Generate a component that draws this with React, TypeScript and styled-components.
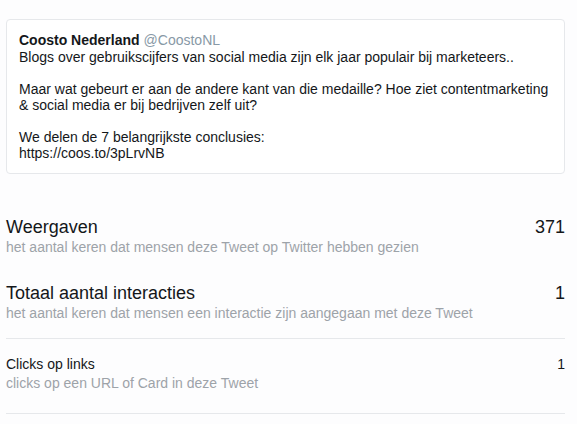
import { createGlobalStyle, styled } from "styled-components";

const GlobalStyle = createGlobalStyle`
    html, body {
        margin: 0;
        padding: 0;
        background: #fdfdfe;
        font-family: "Liberation Sans", Arial, sans-serif;
        color: #14171a;
    }
`;

const Page = styled.div`
    width: 559px;
    padding: 19px 12px 0 6px;
`;

const TweetCard = styled.div`
    border: 1px solid #e6e8eb;
    border-radius: 4px;
    background: #fff;
    padding: 12px 12px 12px 12px;
    font-size: 14px;
    line-height: 16px;
`;

const Name = styled.span`
    font-weight: 700;
    font-size: 14px;
`;

const Handle = styled.span`
    color: #8899a6;
    font-size: 14px;
    margin-left: 4px;
`;

const Body = styled.p`
    margin: 1px 0 0;
    white-space: pre-line;
`;

const Metrics = styled.div`
    margin-top: 42px;
`;

const Metric = styled.div<{ $divider?: boolean; $gap: number }>`
    display: flex;
    justify-content: space-between;
    padding-bottom: ${(p) => p.$gap}px;
    border-bottom: ${(p) => (p.$divider ? "1px solid #e6e8eb" : "none")};
    margin-bottom: ${(p) => (p.$divider ? 16 : 0)}px;
`;

const Label = styled.div<{ $small?: boolean }>`
    font-size: ${(p) => (p.$small ? 14 : 18)}px;
    line-height: ${(p) => (p.$small ? 19 : 22)}px;
    color: #14171a;
`;

const Hint = styled.div`
    font-size: 14px;
    line-height: 18px;
    color: #9da3a9;
`;

const Value = styled.div<{ $small?: boolean }>`
    font-size: ${(p) => (p.$small ? 14 : 18)}px;
    line-height: ${(p) => (p.$small ? 19 : 22)}px;
`;

const tweetText = `Blogs over gebruikscijfers van social media zijn elk jaar populair bij marketeers..

Maar wat gebeurt er aan de andere kant van die medaille? Hoe ziet contentmarketing & social media er bij bedrijven zelf uit?

We delen de 7 belangrijkste conclusies:
https://coos.to/3pLrvNB`;

export default function App() {
    return (
        <>
            <GlobalStyle />
            <Page>
                <TweetCard>
                    <Name>Coosto Nederland</Name>
                    <Handle>@CoostoNL</Handle>
                    <Body>{tweetText}</Body>
                </TweetCard>
                <Metrics>
                    <Metric $gap={26}>
                        <div>
                            <Label>Weergaven</Label>
                            <Hint>het aantal keren dat mensen deze Tweet op Twitter hebben gezien</Hint>
                        </div>
                        <Value>371</Value>
                    </Metric>
                    <Metric $gap={16} $divider>
                        <div>
                            <Label>Totaal aantal interacties</Label>
                            <Hint>het aantal keren dat mensen een interactie zijn aangegaan met deze Tweet</Hint>
                        </div>
                        <Value>1</Value>
                    </Metric>
                    <Metric $gap={21} $divider>
                        <div>
                            <Label $small>Clicks op links</Label>
                            <Hint>clicks op een URL of Card in deze Tweet</Hint>
                        </div>
                        <Value $small>1</Value>
                    </Metric>
                </Metrics>
            </Page>
        </>
    );
}
